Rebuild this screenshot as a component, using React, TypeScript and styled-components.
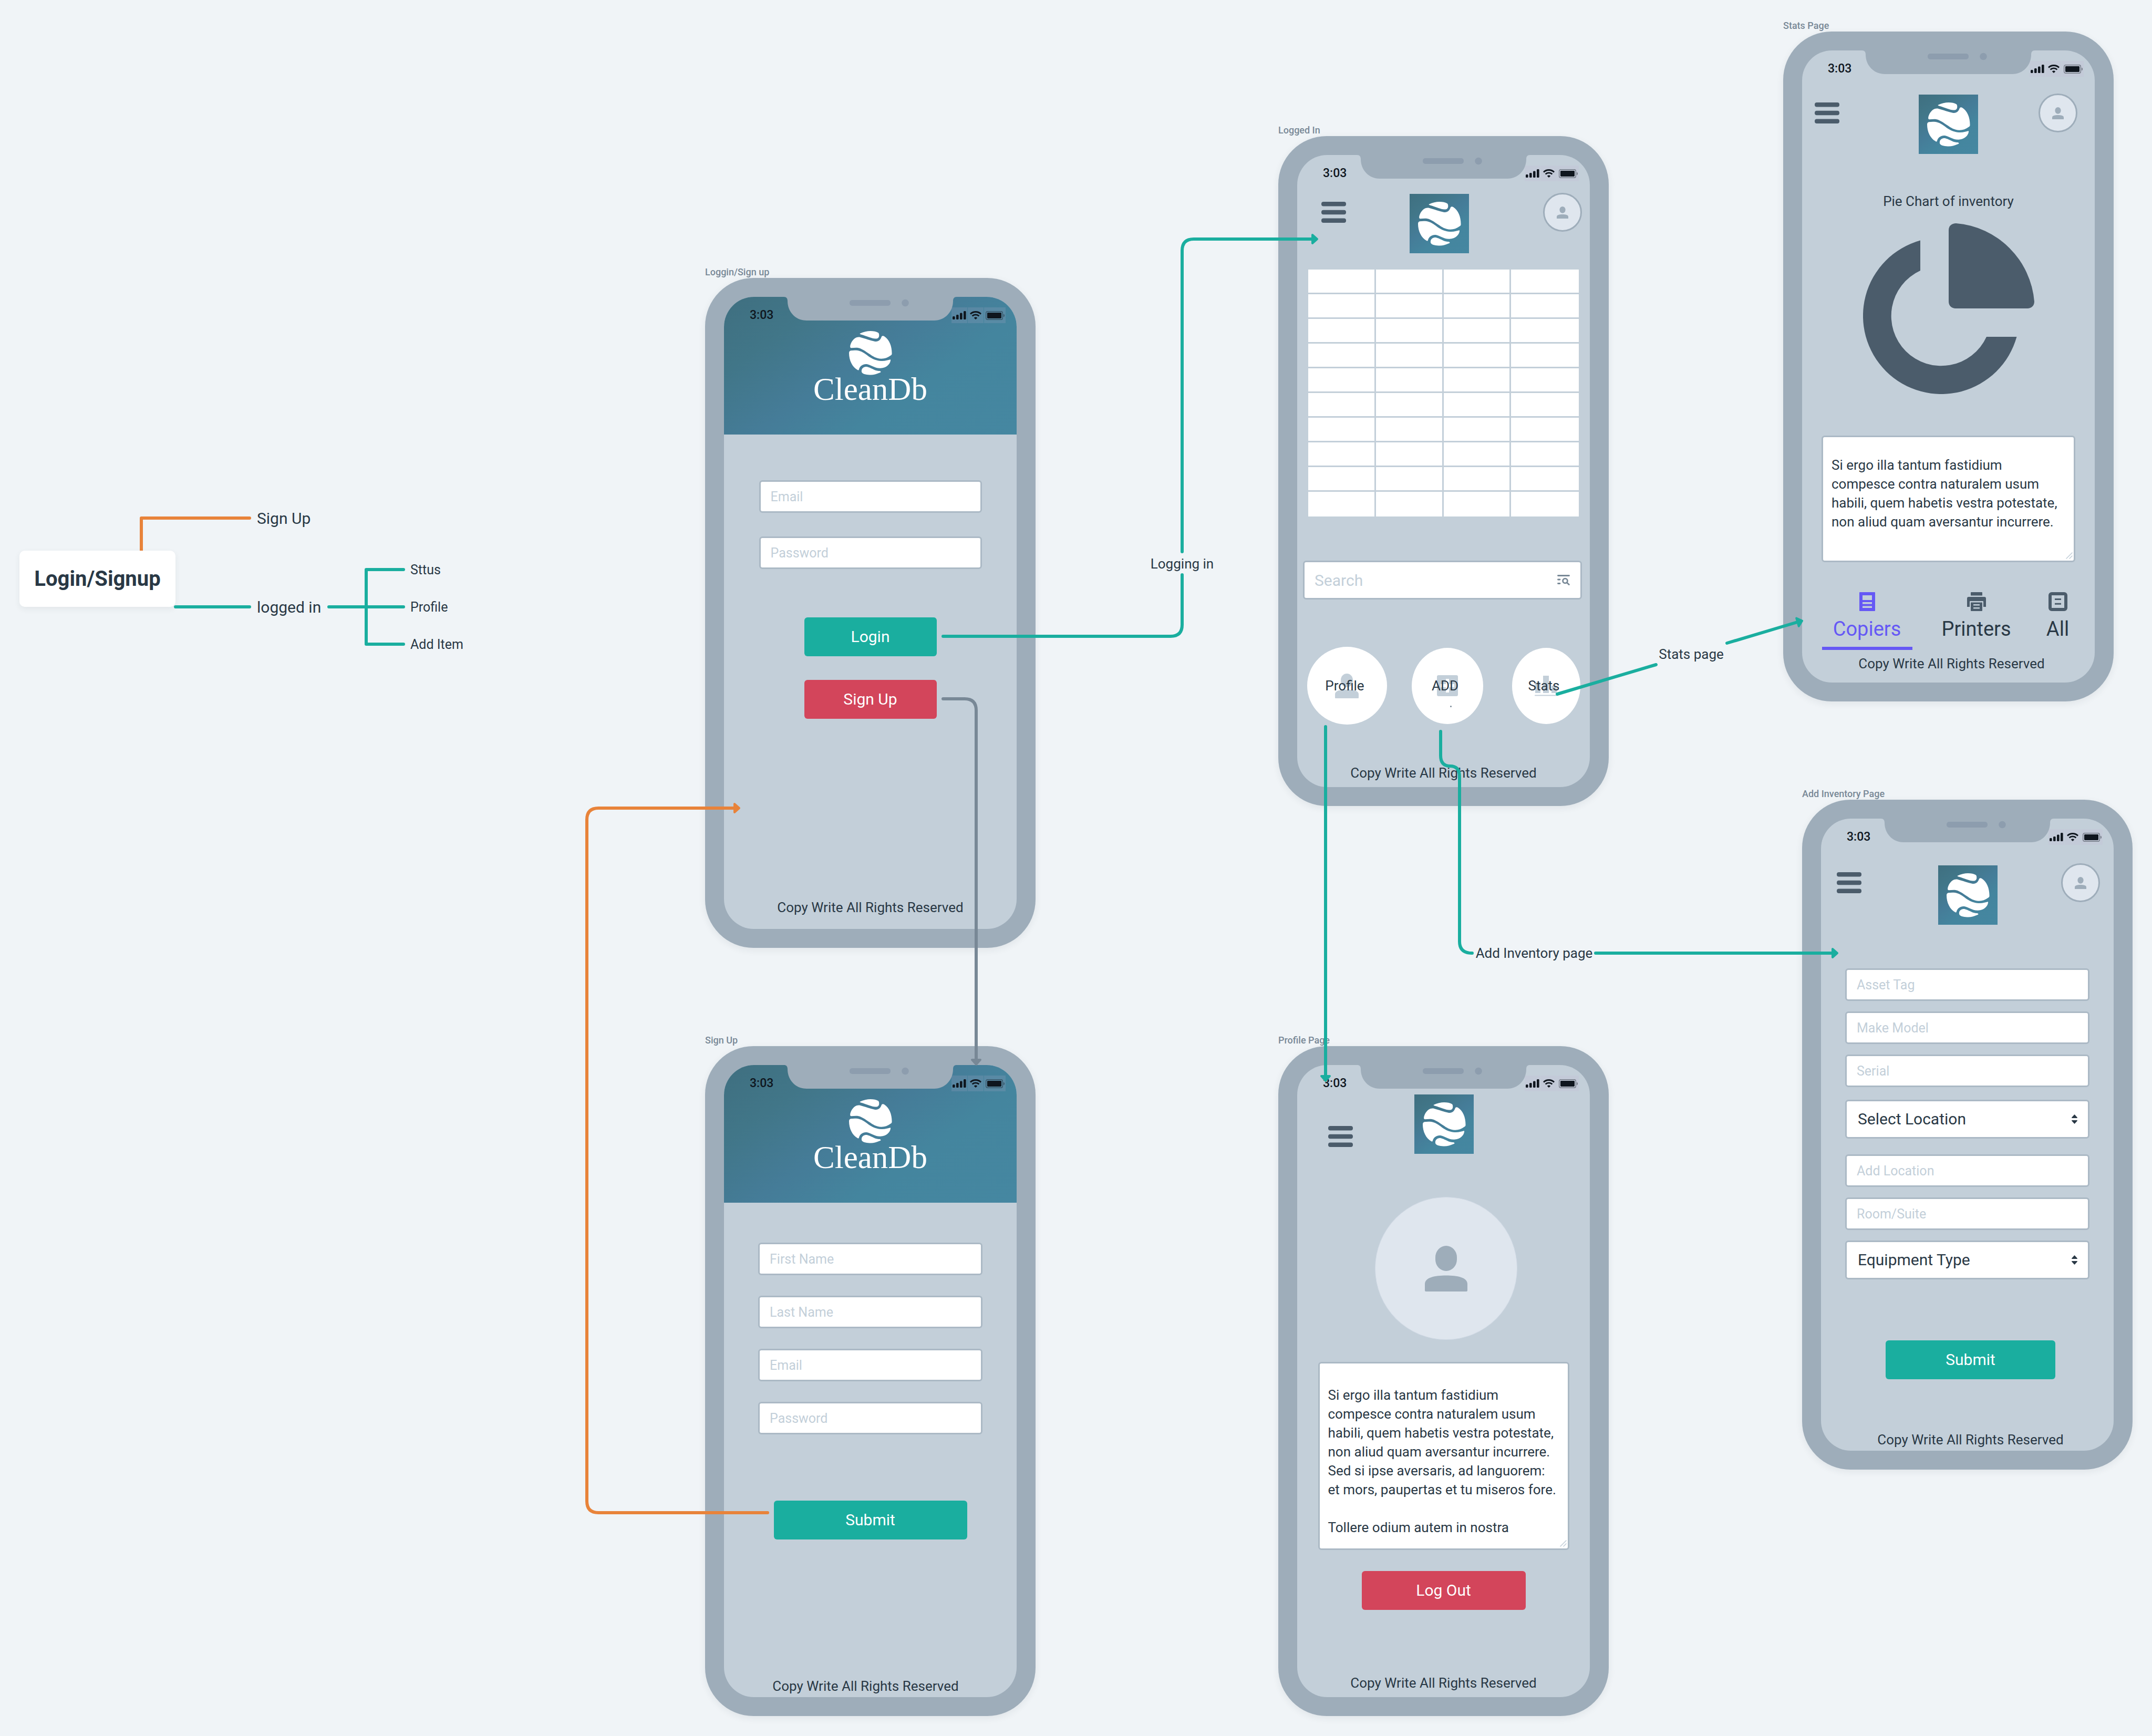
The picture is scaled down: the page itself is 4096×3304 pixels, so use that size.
import React from "react";
import styled, { createGlobalStyle } from "styled-components";

const c = {
  board: "#f0f4f7",
  body: "#9eadba",
  screen: "#c3cfd9",
  sensor: "#8d9dae",
  ink: "#293845",
  slate: "#4b5c6b",
  muted: "#788896",
  line: "#abb9c5",
  pale: "#dfe6ee",
  green: "#1aae9f",
  red: "#d3455b",
  orange: "#e8833a",
  purple: "#6558f5",
  black: "#0f161e",
};

const gradient =
  "linear-gradient(145deg, #3f6f80 0%, #417688 22%, #457c98 46%, #44859e 66%, #4587a1 100%)";

const Global = createGlobalStyle`
  *, *::before, *::after { box-sizing: border-box; }
  body {
    margin: 0;
    background: ${c.board};
    color: ${c.ink};
    font-family: Roboto, "Liberation Sans", sans-serif;
    font-size: 26px;
    line-height: 36px;
  }
  button, input, select, textarea { font: inherit; color: inherit; margin: 0; }
`;

const Board = styled.main`
  position: relative;
  width: 100%;
  min-height: 100vh;
  overflow: hidden;
`;

/* ---------- phone shell ---------- */

const Frame = styled.section<{ $x: number; $y: number }>`
  position: absolute;
  left: ${(p) => p.$x}px;
  top: ${(p) => p.$y - 22}px;
  width: 629px;
`;

const FrameTitle = styled.h2`
  margin: 0;
  font-size: 18px;
  font-weight: 500;
  line-height: 22px;
  color: ${c.muted};
`;

const Shell = styled.div`
  padding: 36px;
  border-radius: 92px;
  background: ${c.body};
  box-shadow: 0 4px 14px rgba(40, 50, 60, 0.08);
`;

const Screen = styled.div`
  position: relative;
  display: flex;
  flex-direction: column;
  align-items: center;
  min-height: 1203px;
  border-radius: 57px;
  overflow: hidden;
  background: ${c.screen};
`;

const StatusBar = styled.div`
  position: absolute;
  inset: 0 0 auto 0;
  display: flex;
  justify-content: space-between;
  align-items: center;
  height: 70px;
  padding: 0 21px 0 49px;
  color: ${c.black};
  font-size: 23px;
  font-weight: 500;
`;

const NotchArt = styled.svg`
  position: absolute;
  top: 0;
  left: 114px;
`;

const StatusIcons = styled.div`
  display: flex;
  gap: 1px;
`;

const StatusIcon = styled.span<{ $w: number }>`
  display: grid;
  place-items: center;
  width: ${(p) => p.$w}px;
  height: 30px;
  background: rgba(200, 180, 210, 0.16);
`;

function Notch() {
  return (
    <NotchArt width="329" height="45" viewBox="0 0 329 45" aria-hidden="true">
      <path
        d="M0 0 C5 0 7 3 7 8 C7 28 22 45 43 45 H286 C307 45 322 28 322 8 C322 3 324 0 329 0 Z"
        fill={c.body}
      />
      <rect x="125" y="6" width="78" height="11" rx="5" fill={c.sensor} />
      <circle cx="231" cy="11.5" r="6.8" fill={c.sensor} />
    </NotchArt>
  );
}

function Status() {
  return (
    <StatusBar>
      <time>3:03</time>
      <StatusIcons>
        <StatusIcon $w={30}>
          <svg width="26" height="16" viewBox="0 0 26 16" fill={c.black} aria-hidden="true">
            <rect x="0" y="10" width="4.6" height="6" rx="1.5" />
            <rect x="7" y="7" width="4.6" height="9" rx="1.5" />
            <rect x="14" y="3.5" width="4.6" height="12.5" rx="1.5" />
            <rect x="21" y="0" width="4.6" height="16" rx="1.5" />
          </svg>
        </StatusIcon>
        <StatusIcon $w={30}>
          <svg width="22" height="16" viewBox="0 0 22 16" aria-hidden="true">
            <path d="M1 5.6 A14.4 14.4 0 0 1 21 5.6" fill="none" stroke={c.black} strokeWidth="3" />
            <path d="M4.6 9.6 A9 9 0 0 1 17.4 9.6" fill="none" stroke={c.black} strokeWidth="2.8" />
            <path d="M7.8 13 A4.8 4.8 0 0 1 14.2 13 L11 16 Z" fill={c.black} />
          </svg>
        </StatusIcon>
        <StatusIcon $w={41}>
          <svg width="36" height="17" viewBox="0 0 36 17" aria-hidden="true">
            <rect x="0.7" y="0.7" width="31.6" height="15.6" rx="3" fill="none" stroke={c.black} strokeOpacity="0.45" strokeWidth="1.4" />
            <rect x="3" y="3" width="27" height="11" rx="1.4" fill={c.black} />
            <path d="M34 5.6 C36.4 6.6 36.4 10.4 34 11.4 Z" fill={c.black} fillOpacity="0.5" />
          </svg>
        </StatusIcon>
      </StatusIcons>
    </StatusBar>
  );
}

function Phone(props: { title: string; x: number; y: number; children: React.ReactNode }) {
  return (
    <Frame $x={props.x} $y={props.y} aria-label={props.title}>
      <FrameTitle>{props.title}</FrameTitle>
      <Shell>
        <Screen>
          {props.children}
          <Status />
          <Notch />
        </Screen>
      </Shell>
    </Frame>
  );
}

/* ---------- brand ---------- */

function Globe({ width }: { width: number }) {
  return (
    <svg width={width} height={width + 2} viewBox="0 0 189 196" preserveAspectRatio="none" fill="#fff" aria-hidden="true">
      <path d="M48 11 C62 4 80 0 94 0 C108 0 120 3 127 7 C131 9 132 14 132 19 C132 29 126 35 115 34 C100 33 80 23 52 15 C48 14 46 12 48 11 Z" />
      <path d="M5 70 C4 60 14 40 26 32 C34 27 42 26 50 28 C70 34 95 42 112 46 C128 49 138 40 142 27 C144 20 150 20 155 24 C176 38 188 65 188 100 C188 105 186 107 182 109 C170 118 157 123 142 123 C118 122 104 112 90 102 C70 88 55 78 42 75 C30 73 20 75 10 75 C6 75 5 73 5 70 Z" />
      <path d="M0 98 C0 91 3 88 8 87 C22 85 36 85 48 89 C66 95 80 109 96 119 C112 129 128 133 146 133 C160 133 170 129 179 127 C182 126 183 128 182 131 C180 146 165 164 138 165 C112 166 96 150 78 147 C62 145 50 154 45 166 C43 172 43 176 38 173 C14 160 0 130 0 98 Z" />
      <path d="M55 177 C56 164 66 158 80 159 C94 162 110 174 126 177 C130 178 136 177 139 180 C141 183 136 184 132 186 C120 191 108 195 96 195 C80 195 62 192 57 185 C55 182 55 180 55 177 Z" />
    </svg>
  );
}

const Banner = styled.header`
  display: flex;
  flex-direction: column;
  align-items: center;
  width: 100%;
  height: 262px;
  padding-top: 65px;
  background: ${gradient};
`;

const Wordmark = styled.h1`
  margin: 0;
  color: #fff;
  font-family: "Liberation Serif", serif;
  font-size: 61px;
  font-weight: 400;
  line-height: 54px;
`;

const LogoTile = styled.div`
  display: grid;
  place-items: center;
  width: 113px;
  height: 113px;
  background: ${gradient};
`;

function Brand() {
  return (
    <Banner>
      <Globe width={82} />
      <Wordmark>CleanDb</Wordmark>
    </Banner>
  );
}

/* ---------- controls ---------- */

const Stack = styled.div<{ $top: number; $w: number; $gap?: number; $inset?: number }>`
  display: flex;
  flex-direction: column;
  gap: ${(p) => p.$gap ?? 0}px;
  width: ${(p) => p.$w}px;
  max-width: 100%;
  margin-top: ${(p) => p.$top}px;
  margin-left: ${(p) => p.$inset ?? 0}px;
`;

const Field = styled.input<{ $tall?: boolean }>`
  width: 100%;
  height: ${(p) => (p.$tall ? 74 : 62)}px;
  padding: 0 19px;
  border: 3px solid ${c.line};
  border-radius: 6px;
  background: #fff;
  outline: 0;
  font-size: ${(p) => (p.$tall ? 30 : 25)}px;
  &::placeholder { color: ${c.screen}; opacity: 1; }
`;

const Button = styled.button<{ $tone: "green" | "red" }>`
  height: 74px;
  border: 0;
  border-radius: 6px;
  background: ${(p) => c[p.$tone]};
  color: #fff;
  font-size: 30px;
`;

const Picker = styled.div`
  position: relative;
  svg { position: absolute; right: 23px; top: 28px; pointer-events: none; }
`;

const Select = styled.select`
  display: block;
  appearance: none;
  width: 100%;
  height: 74px;
  padding: 0 21px;
  border: 3px solid ${c.line};
  border-radius: 6px;
  background: #fff;
  font-size: 30px;
`;

const SearchBox = styled.div`
  position: relative;
  svg { position: absolute; right: 23px; top: 27px; }
`;

const NoteBox = styled.div`
  position: relative;
  svg { position: absolute; right: 5px; bottom: 6px; }
`;

const Note = styled.textarea<{ $h: number; $pad: number }>`
  display: block;
  width: 100%;
  height: ${(p) => p.$h}px;
  padding: ${(p) => p.$pad}px 0 0 16px;
  border: 3px solid ${c.line};
  border-radius: 6px;
  background: #fff;
  resize: none;
  overflow: hidden;
  white-space: pre;
  outline: 0;
`;

const Footer = styled.p<{ $bottom: number; $left?: number; $right?: number }>`
  width: 100%;
  margin: auto 0 0;
  padding: 0 ${(p) => p.$right ?? 0}px ${(p) => p.$bottom}px ${(p) => p.$left ?? 0}px;
  text-align: center;
`;

const Rights = (p: { bottom: number; left?: number; right?: number }) => (
  <Footer $bottom={p.bottom} $left={p.left} $right={p.right}>
    Copy Write All Rights Reserved
  </Footer>
);

function Dropdown({ label }: { label: string }) {
  return (
    <Picker>
      <Select aria-label={label}>
        <option>{label}</option>
      </Select>
      <svg width="11" height="18" viewBox="0 0 11 18" fill={c.ink} aria-hidden="true">
        <path d="M5.5 0 L11 6 Q11 7 10 7 H1 Q0 7 0 6 Z" />
        <path d="M5.5 18 L11 12 Q11 11 10 11 H1 Q0 11 0 12 Z" />
      </svg>
    </Picker>
  );
}

function NoteArea(props: { label: string; h: number; pad: number; text: string }) {
  return (
    <NoteBox>
      <Note aria-label={props.label} $h={props.h} $pad={props.pad} defaultValue={props.text} />
      <svg width="13" height="13" viewBox="0 0 13 13" stroke={c.screen} strokeWidth="1.6" strokeLinecap="round" aria-hidden="true">
        <path d="M1 12 L12 1 M7 12 L12 7" />
      </svg>
    </NoteBox>
  );
}

function Person({ w, h, fill = c.body }: { w: number; h: number; fill?: string }) {
  return (
    <svg width={w} height={h} viewBox="0 0 81 87" preserveAspectRatio="none" fill={fill} aria-hidden="true">
      <rect x="20" y="0" width="41" height="48" rx="20.5" ry="22" />
      <path d="M0 85 V73 C0 60 19 56.5 40.5 56.5 S81 60 81 73 V85 Q81 87 79 87 H2 Q0 87 0 85 Z" />
    </svg>
  );
}

/* ---------- toolbar ---------- */

const Bar = styled.nav<{ $top: number; $left: number; $right: number; $lead: number }>`
  display: grid;
  grid-template-columns: ${(p) => p.$lead}px 113px 1fr;
  align-items: start;
  width: 100%;
  padding: ${(p) => p.$top}px ${(p) => p.$right}px 0 ${(p) => p.$left}px;
`;

const MenuButton = styled.button<{ $drop: number }>`
  display: grid;
  width: 47px;
  margin-top: ${(p) => p.$drop}px;
  padding: 0;
  border: 0;
  background: none;
`;

const AvatarButton = styled.button`
  display: grid;
  place-items: center;
  justify-self: end;
  width: 74px;
  height: 74px;
  padding: 0;
  border: 3px solid ${c.body};
  border-radius: 50%;
  background: ${c.pale};
`;

const Drop = styled.div<{ $y: number }>`
  padding-top: ${(p) => p.$y}px;
`;

function Toolbar(props: {
  top: number; left: number; right?: number; lead: number; menuDrop?: number; logoDrop?: number; avatar?: boolean;
}) {
  return (
    <Bar $top={props.top} $left={props.left} $right={props.right ?? 0} $lead={props.lead}>
      <MenuButton $drop={props.menuDrop ?? 17} aria-label="Menu">
        <svg width="47" height="40" viewBox="0 0 47 40" fill={c.slate} aria-hidden="true">
          <rect x="0" y="0" width="47" height="8.4" rx="4" />
          <rect x="0" y="15.8" width="47" height="8.4" rx="4" />
          <rect x="0" y="31.6" width="47" height="8.4" rx="4" />
        </svg>
      </MenuButton>
      <Drop $y={props.logoDrop ?? 0}>
        <LogoTile>
          <Globe width={82} />
        </LogoTile>
      </Drop>
      {props.avatar && (
        <AvatarButton aria-label="Account">
          <Person w={22} h={23} />
        </AvatarButton>
      )}
    </Bar>
  );
}

/* ---------- logged in ---------- */

const Grid = styled.table`
  width: 515px;
  margin-top: 31px;
  border-collapse: separate;
  border-spacing: 0;
  table-layout: fixed;
  background: #fff;
  td {
    height: 47px;
    padding: 0;
    border: solid ${c.screen};
    border-width: 0 3px 3px 0;
  }
  td:last-child { border-right: 0; }
  tr:last-child td { border-bottom: 0; }
`;

const Shortcuts = styled.div`
  display: grid;
  grid-template-columns: 199px 191px 130px;
  align-items: center;
  margin-top: 90px;
`;

const Shortcut = styled.button<{ $w: number; $h: number }>`
  display: grid;
  place-items: center;
  width: ${(p) => p.$w}px;
  height: ${(p) => p.$h}px;
  padding: 0;
  border: 0;
  border-radius: 50%;
  background: #fff;
  > * { grid-area: 1 / 1; }
`;

const ShortcutLabel = styled.span`
  padding-right: 8px;
`;

const Speck = styled.i`
  width: 3px;
  height: 3px;
  margin: 78px 0 0 13px;
  border-radius: 50%;
  background: ${c.muted};
`;

/* ---------- profile, stats ---------- */

const Portrait = styled.div`
  display: grid;
  place-items: center;
  width: 271px;
  height: 272px;
  margin: 82px 0 0 10px;
  border: 1px solid #d1dae5;
  border-radius: 50%;
  background: ${c.pale};
`;

const ChartTitle = styled.h3`
  margin: 72px 0 24px;
  font-size: 26px;
  font-weight: 400;
`;

const Tabs = styled.div`
  display: grid;
  grid-template-columns: 172px 244px 66px;
  margin-top: 57px;
`;

const Tab = styled.button<{ $on?: boolean }>`
  display: flex;
  flex-direction: column;
  align-items: center;
  gap: 10px;
  padding: 0 0 10px;
  border: 0;
  border-bottom: 6px solid ${(p) => (p.$on ? c.purple : "transparent")};
  background: none;
  color: ${(p) => (p.$on ? c.purple : c.ink)};
  font-size: 38px;
  line-height: 48px;
`;

/* ---------- mind map ---------- */

const RootNode = styled.div`
  position: absolute;
  left: 37px;
  top: 1048px;
  display: grid;
  place-items: center;
  width: 297px;
  height: 107px;
  border-radius: 10px;
  background: #fff;
  box-shadow: 0 4px 12px rgba(40, 50, 60, 0.07);
  font-size: 40px;
  font-weight: 700;
`;

const Leaf = styled.span<{ $x: number; $y: number; $size: number }>`
  position: absolute;
  left: ${(p) => p.$x}px;
  top: ${(p) => p.$y - 18}px;
  font-size: ${(p) => p.$size}px;
  white-space: nowrap;
`;

const LinkLabel = styled.span<{ $x: number; $y: number }>`
  position: absolute;
  left: ${(p) => p.$x}px;
  top: ${(p) => p.$y}px;
  transform: translate(-50%, -50%);
  white-space: nowrap;
`;

const Wires = styled.svg`
  position: absolute;
  inset: 0;
  width: 100%;
  height: 100%;
  pointer-events: none;
`;

function Wire({ color, d, head }: { color: string; d: string; head?: string }) {
  return (
    <>
      <path d={d} fill="none" stroke={color} strokeWidth="6" strokeLinecap="round" strokeLinejoin="round" />
      {head && (
        <path d="M-11 -8 L-2 0 L-11 8 Z" transform={head} fill={color} stroke={color} strokeWidth="4" strokeLinejoin="round" />
      )}
    </>
  );
}

const verse =
  "Si ergo illa tantum fastidium\ncompesce contra naturalem usum\nhabili, quem habetis vestra potestate,\nnon aliud quam aversantur incurrere.";

const longVerse =
  verse +
  "\nSed si ipse aversaris, ad languorem:\net mors, paupertas et tu miseros fore.\n\nTollere odium autem in nostra";

export default function App() {
  return (
    <>
      <Global />
      <Board>
        <Wires aria-hidden="true">
          <Wire color={c.orange} d="M269 1060 V986 H475" />
        </Wires>
        <RootNode>Login/Signup</RootNode>
        <Leaf $x={489} $y={987} $size={30}>Sign Up</Leaf>
        <Leaf $x={489} $y={1156} $size={30}>logged in</Leaf>
        <Leaf $x={781} $y={1085} $size={25}>Sttus</Leaf>
        <Leaf $x={781} $y={1156} $size={25}>Profile</Leaf>
        <Leaf $x={781} $y={1227} $size={25}>Add Item</Leaf>

        <Phone title="Loggin/Sign up" x={1342} y={529}>
          <Brand />
          <Stack $top={87} $w={424} $gap={45}>
            <Field placeholder="Email" aria-label="Email" type="email" />
            <Field placeholder="Password" aria-label="Password" type="password" />
          </Stack>
          <Stack $top={92} $w={252} $gap={45}>
            <Button $tone="green">Login</Button>
            <Button $tone="red">Sign Up</Button>
          </Stack>
          <Rights bottom={23} />
        </Phone>

        <Phone title="Sign Up" x={1342} y={1991}>
          <Brand />
          <Stack $top={76} $w={427} $gap={39}>
            <Field placeholder="First Name" aria-label="First Name" />
            <Field placeholder="Last Name" aria-label="Last Name" />
            <Field placeholder="Email" aria-label="Email" type="email" />
            <Field placeholder="Password" aria-label="Password" type="password" />
          </Stack>
          <Stack $top={126} $w={368}>
            <Button $tone="green">Submit</Button>
          </Stack>
          <Rights bottom={3} right={18} />
        </Phone>

        <Phone title="Logged In" x={2433} y={259}>
          <Toolbar top={72} left={46} right={15} lead={168} logoDrop={2} avatar />
          <Grid aria-label="Inventory">
            <tbody>
              {Array.from({ length: 10 }, (_, r) => (
                <tr key={r}>
                  <td />
                  <td />
                  <td />
                  <td />
                </tr>
              ))}
            </tbody>
          </Grid>
          <Stack $top={84} $w={531} $inset={-4}>
            <SearchBox>
              <Field $tall placeholder="Search" aria-label="Search" />
              <svg width="24" height="20" viewBox="0 0 24 20" fill="none" stroke={c.muted} strokeWidth="2.8" strokeLinecap="round" aria-hidden="true">
                <path d="M1.5 1.5 H22.5" />
                <path d="M1.5 9 H5 M1.5 16.5 H5" />
                <circle cx="15" cy="11.5" r="4.4" />
                <path d="M18.5 15 L22.3 18.6" />
              </svg>
            </SearchBox>
          </Stack>
          <Shortcuts>
            <Shortcut $w={152} $h={148}>
              <Person w={45} h={47} fill={c.screen} />
              <ShortcutLabel>Profile</ShortcutLabel>
            </Shortcut>
            <Shortcut $w={136} $h={145}>
              <svg width="40" height="40" viewBox="0 0 40 40" aria-hidden="true">
                <rect width="40" height="40" rx="3" fill={c.screen} />
                <path d="M20 7 V33 M7 20 H33" stroke="#fff" strokeWidth="6" />
              </svg>
              <ShortcutLabel>ADD</ShortcutLabel>
              <Speck />
            </Shortcut>
            <Shortcut $w={130} $h={145}>
              <svg width="44" height="39" viewBox="0 0 44 39" fill={c.screen} aria-hidden="true">
                <rect x="1" y="13" width="10" height="20" />
                <rect x="16" y="0" width="11" height="33" />
                <rect x="32" y="19" width="10" height="14" />
                <rect x="0" y="36.5" width="44" height="2" rx="1" />
              </svg>
              <ShortcutLabel>Stats</ShortcutLabel>
            </Shortcut>
          </Shortcuts>
          <Rights bottom={9} />
        </Phone>

        <Phone title="Profile Page" x={2433} y={1991}>
          <Toolbar top={56} left={59} lead={164} menuDrop={60} />
          <Portrait>
            <Person w={81} h={87} />
          </Portrait>
          <Stack $top={42} $w={478}>
            <NoteArea label="About" h={358} pad={42} text={longVerse} />
          </Stack>
          <Stack $top={40} $w={312}>
            <Button $tone="red">Log Out</Button>
          </Stack>
          <Rights bottom={9} />
        </Phone>

        <Phone title="Stats Page" x={3394} y={60}>
          <Toolbar top={82} left={24} right={33} lead={198} logoDrop={2} avatar />
          <ChartTitle>Pie Chart of inventory</ChartTitle>
          <svg width="326" height="325" viewBox="0 0 326 325" fill={c.slate} role="img" aria-label="Pie chart">
            <path d="M163 13 C163 5 169 0 177 0 A163 163 0 0 1 326 149 C326 157 320 162 313 162 H176 C169 162 163 157 163 149 Z" />
            <path d="M109 32.5 A149 149 0 1 0 292.5 216 H235 A95 95 0 1 1 109 90 Z" />
          </svg>
          <Stack $top={79} $w={483}>
            <NoteArea label="Notes" h={241} pad={35} text={verse} />
          </Stack>
          <Tabs role="tablist">
            <Tab role="tab" $on aria-selected="true">
              <svg width="30" height="36" viewBox="0 0 30 36" fill={c.purple} fillRule="evenodd" aria-hidden="true">
                <path d="M1 0 H29 Q30 0 30 1 V35 Q30 36 29 36 H1 Q0 36 0 35 V1 Q0 0 1 0 Z M6 6 V15 H24 V6 Z M6 19 V22.5 H24 V19 Z M6 26.5 V30 H24 V26.5 Z" />
              </svg>
              Copiers
            </Tab>
            <Tab role="tab" aria-selected="false">
              <svg width="36" height="36" viewBox="0 0 36 36" fill={c.slate} fillRule="evenodd" aria-hidden="true">
                <path d="M8 0 H28 Q29 0 29 1 V6.5 H7 V1 Q7 0 8 0 Z" />
                <path d="M3 9 H33 Q36 9 36 12 V28 H31 V18 Q31 17 30 17 H6 Q5 17 5 18 V28 H0 V12 Q0 9 3 9 Z" />
                <path d="M7 19.5 H29 V35 Q29 36 28 36 H8 Q7 36 7 35 Z M12 23 V25.5 H24 V23 Z M12 29 V31.5 H24 V29 Z" />
              </svg>
              Printers
            </Tab>
            <Tab role="tab" aria-selected="false">
              <svg width="36" height="36" viewBox="0 0 36 36" fill="none" stroke={c.slate} aria-hidden="true">
                <rect x="3" y="3" width="30" height="30" rx="3" strokeWidth="6" />
                <path d="M12 13.5 H24 M12 22.2 H24" strokeWidth="3" />
              </svg>
              All
            </Tab>
          </Tabs>
          <Rights bottom={18} left={12} />
        </Phone>

        <Phone title="Add Inventory Page" x={3430} y={1522}>
          <Toolbar top={85} left={30} right={26} lead={193} logoDrop={4} avatar />
          <Stack $top={83} $w={465} $gap={20}>
            <Field placeholder="Asset Tag" aria-label="Asset Tag" />
            <Field placeholder="Make Model" aria-label="Make Model" />
            <Field placeholder="Serial" aria-label="Serial" />
          </Stack>
          <Stack $top={24} $w={465}>
            <Dropdown label="Select Location" />
          </Stack>
          <Stack $top={30} $w={465} $gap={20}>
            <Field placeholder="Add Location" aria-label="Add Location" />
            <Field placeholder="Room/Suite" aria-label="Room/Suite" />
            <Dropdown label="Equipment Type" />
          </Stack>
          <Stack $top={116} $w={323} $inset={12}>
            <Button $tone="green">Submit</Button>
          </Stack>
          <Rights bottom={3} left={12} />
        </Phone>

        <Wires aria-hidden="true">
          <Wire color={c.green} d="M334 1155 H475" />
          <Wire color={c.green} d="M626 1155 H768 M768 1084 H697 V1226 H768" />
          <Wire color={c.green} d="M1795 1211 H2228 Q2250 1211 2250 1189 V1094" />
          <Wire color={c.green} d="M2250 1050 V477 Q2250 455 2272 455 H2498" head="translate(2509 455)" />
          <Wire color={c.muted} d="M1795 1330 H1836 Q1858 1330 1858 1352 V2017" head="translate(1858 2028) rotate(90)" />
          <Wire color={c.orange} d="M1461 2879 H1139 Q1117 2879 1117 2857 V1560 Q1117 1538 1139 1538 H1398" head="translate(1409 1538)" />
          <Wire color={c.green} d="M2964 1321 L3152 1265 M3287 1224 L3421 1184" head="translate(3432 1181) rotate(-16.7)" />
          <Wire color={c.green} d="M2523 1383 V2048" head="translate(2523 2059) rotate(90)" />
          <Wire color={c.green} d="M2742 1392 V1438 Q2742 1458 2760 1458 Q2778 1458 2778 1478 V1792 Q2778 1814 2802 1814" />
          <Wire color={c.green} d="M3037 1814 H3488" head="translate(3499 1814)" />
        </Wires>
        <LinkLabel $x={2250} $y={1073}>Logging in</LinkLabel>
        <LinkLabel $x={3219} $y={1245}>Stats page</LinkLabel>
        <LinkLabel $x={2920} $y={1814}>Add Inventory page</LinkLabel>
      </Board>
    </>
  );
}
